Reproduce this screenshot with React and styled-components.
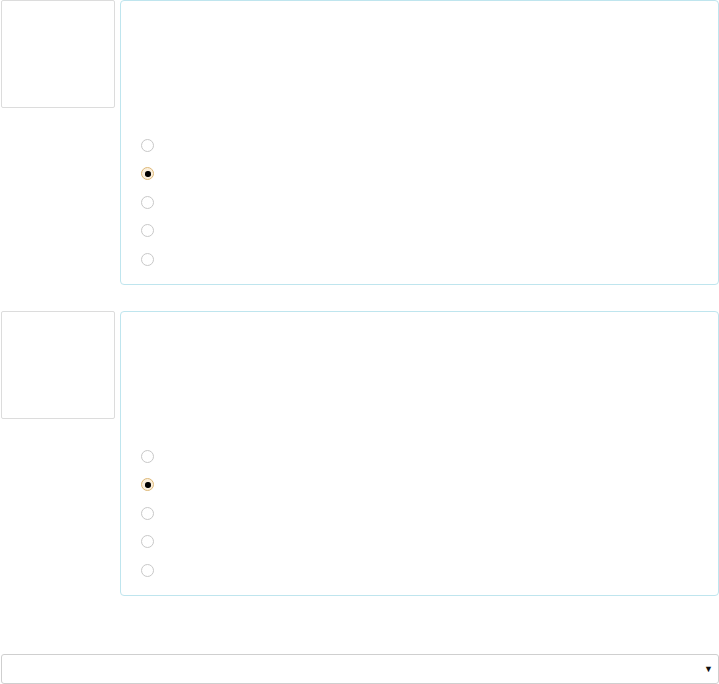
import React from "react";
import styled, { createGlobalStyle } from "styled-components";

const Global = createGlobalStyle`
  html, body { margin: 0; padding: 0; background: #fff; }
  body { font-family: "Liberation Sans", Arial, sans-serif; font-size: 14px; color: #333; }
`;

const Page = styled.div`
  width: 719px;
  height: 684px;
  padding-left: 1px;
  box-sizing: border-box;
  display: flex;
  flex-direction: column;
`;

const Question = styled.div`
  display: flex;
  gap: 5px;
  margin-bottom: 26px;
`;

const Thumb = styled.div`
  width: 114px;
  height: 108px;
  box-sizing: border-box;
  border: 1px solid #dcdcdc;
  border-radius: 2px;
  flex: none;
`;

const Panel = styled.div`
  width: 599px;
  height: 285px;
  box-sizing: border-box;
  border: 1px solid #bfe5ee;
  border-radius: 4px;
  padding: 138px 0 0 20px;
  display: flex;
  flex-direction: column;
  gap: 15.4px;
`;

const Radio = styled.span`
  display: block;
  width: 13px;
  height: 13px;
  box-sizing: border-box;
  border-radius: 50%;
  border: 1px solid ${(p) => (p.$on ? "#ddb878" : "#c8c8c8")};
  background: ${(p) => (p.$on ? "#fbefdc" : "#fff")};
  position: relative;
  &::after {
    content: "";
    display: ${(p) => (p.$on ? "block" : "none")};
    position: absolute;
    left: 2.5px;
    top: 2.5px;
    width: 6px;
    height: 6px;
    border-radius: 45%;
    background: #000;
  }
`;

const Spacer = styled.div`
  flex: 1;
`;

const Select = styled.div`
  width: 718px;
  height: 30px;
  box-sizing: border-box;
  border: 1px solid #cfcfcf;
  border-radius: 3px;
  display: flex;
  align-items: center;
  justify-content: flex-end;
  padding-right: 5px;
  font-size: 9px;
  color: #111;
`;

function Block() {
  return (
    <Question>
      <Thumb />
      <Panel>
        {[0, 1, 2, 3, 4].map((i) => (
          <Radio key={i} $on={i === 1} />
        ))}
      </Panel>
    </Question>
  );
}

export default function App() {
  return (
    <>
      <Global />
      <Page>
        <Block />
        <Block />
        <Spacer />
        <Select>▼</Select>
      </Page>
    </>
  );
}
